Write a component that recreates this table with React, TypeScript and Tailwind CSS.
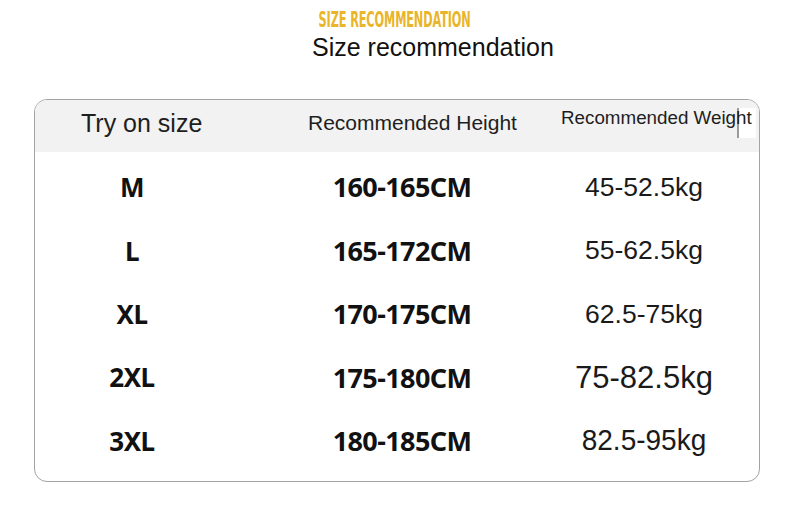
import React from "react";

const rows = [
  { size: "M", height: "160-165CM", weight: "45-52.5kg", w: "text-[26.5px]" },
  { size: "L", height: "165-172CM", weight: "55-62.5kg", w: "text-[26.5px]" },
  { size: "XL", height: "170-175CM", weight: "62.5-75kg", w: "text-[26.5px]" },
  { size: "2XL", height: "175-180CM", weight: "75-82.5kg", w: "text-[31px]" },
  { size: "3XL", height: "180-185CM", weight: "82.5-95kg", w: "text-[28px] scale-y-105" },
];

export default function App() {
  return (
    <main className="w-[789px] h-[523px] bg-white pt-[11px] font-['Liberation_Sans',Arial,sans-serif] text-[#1a1a1a]">
      {/* titre */}
      <div className="flex flex-col items-start">
        <div className="h-[20px] w-[789px] flex items-center justify-center">
          <span className="inline-block scale-x-[0.72] scale-y-[1.2] font-['DejaVu_Sans_Condensed',sans-serif] font-bold text-[17.5px] leading-none tracking-[-0.2px] text-[#e9b52a]">
            SIZE RECOMMENDATION
          </span>
        </div>
        <h1 className="ml-[312px] mt-[1px] text-[25px] leading-[30px] text-[#111]">Size recommendation</h1>
      </div>

      {/* tableau */}
      <div className="ml-[34px] w-[726px] mt-[37px] h-[383px] border-[1.5px] border-[#a3a3a3] rounded-[13px] overflow-hidden">
        <div className="relative grid grid-cols-[46px_227px_253px_1fr] h-[52px] bg-[#f2f2f2] items-center">
          <div />
          <span className="text-[25px] text-[#1e1e1e] pb-[5px]">Try on size</span>
          <span className="relative z-10 text-[21px] text-[#1e1e1e] pb-[6px]">Recommended Height</span>
          <span className="relative z-10 text-[18.8px] text-[#1e1e1e] whitespace-nowrap pb-[16px]">Recommended Weight</span>
          <div className="absolute right-[3px] top-[8px] w-[19px] h-[30px] bg-white border-l-2 border-[#9a9a9a]" />
        </div>

        <div className="pt-[4px]">
          {rows.map((r) => (
            <div key={r.size} className="grid grid-cols-[194px_346px_138px] h-[63.4px] items-center">
              <span className="text-center font-['Noto_Sans',sans-serif] font-bold text-[26px] tracking-[-0.5px] text-[#111]">
                {r.size}
              </span>
              <span className="text-center font-['Noto_Sans',sans-serif] font-bold text-[27px] tracking-[-0.6px] text-[#111]">
                {r.height}
              </span>
              <span className={`text-center whitespace-nowrap inline-block ${r.w} text-[#1a1a1a]`}>{r.weight}</span>
            </div>
          ))}
        </div>
      </div>
    </main>
  );
}
